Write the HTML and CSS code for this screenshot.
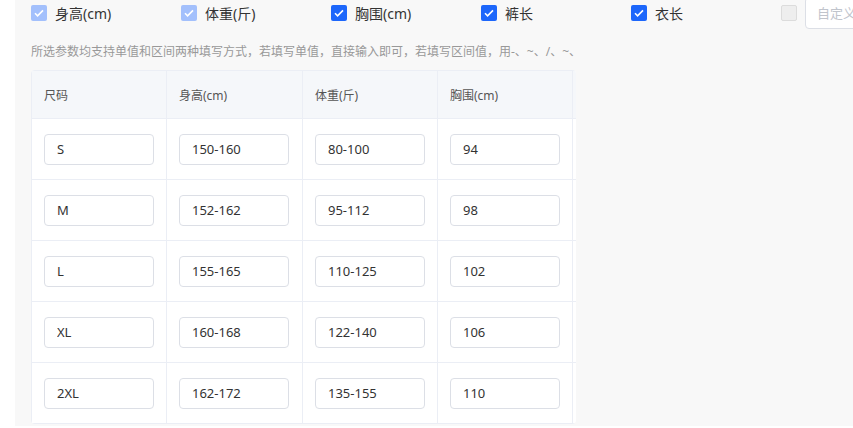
FILE: index.html
```
<!DOCTYPE html>
<html lang="zh-CN">
<head>
    <meta charset="UTF-8">
    <title>尺码表</title>
    <link rel="stylesheet" href="styles.css">
</head>
<body>
    <div class="panel">
        <div class="params">
            <label class="param"><span class="box disabled-on"><svg viewBox="0 0 16 16"><path d="M4 8.2l2.6 2.6L12 5.4" /></svg></span>身高(cm)</label>
            <label class="param"><span class="box disabled-on"><svg viewBox="0 0 16 16"><path d="M4 8.2l2.6 2.6L12 5.4" /></svg></span>体重(斤)</label>
            <label class="param"><span class="box on"><svg viewBox="0 0 16 16"><path d="M4 8.2l2.6 2.6L12 5.4" /></svg></span>胸围(cm)</label>
            <label class="param"><span class="box on"><svg viewBox="0 0 16 16"><path d="M4 8.2l2.6 2.6L12 5.4" /></svg></span>裤长</label>
            <label class="param"><span class="box on"><svg viewBox="0 0 16 16"><path d="M4 8.2l2.6 2.6L12 5.4" /></svg></span>衣长</label>
            <div class="param custom">
                <span class="box off"></span>
                <input class="custom-input" type="text" placeholder="自定义">
            </div>
        </div>

        <p class="hint">所选参数均支持单值和区间两种填写方式，若填写单值，直接输入即可，若填写区间值，用-、~、/、~、</p>

        <div class="table-wrap">
            <table class="size-table">
                <thead>
                    <tr>
                        <th>尺码</th>
                        <th>身高(cm)</th>
                        <th>体重(斤)</th>
                        <th>胸围(cm)</th>
                        <th></th>
                    </tr>
                </thead>
                <tbody id="rows"></tbody>
            </table>
        </div>
    </div>

    <script>
        const sizes = [
            ["S", "150-160", "80-100", "94"],
            ["M", "152-162", "95-112", "98"],
            ["L", "155-165", "110-125", "102"],
            ["XL", "160-168", "122-140", "106"],
            ["2XL", "162-172", "135-155", "110"]
        ];

        const rows = document.getElementById("rows");
        sizes.forEach(row => {
            const tr = document.createElement("tr");
            [...row, ""].forEach(value => {
                const td = document.createElement("td");
                td.innerHTML = `<input class="cell-input" type="text" value="${value}">`;
                tr.appendChild(td);
            });
            rows.appendChild(tr);
        });
    </script>
</body>
</html>
```

FILE: styles.css
```
* {
    box-sizing: border-box;
}

body {
    margin: 0;
    background-color: #fff;
    font-family: "Noto Sans", "Noto Sans CJK SC", sans-serif;
    color: #333;
    overflow: hidden;
}

.panel {
    margin-left: 15px;
    height: 428px;
    background-color: #f8f8f8;
    padding-left: 16px;
}

.params {
    display: flex;
    align-items: center;
    height: 30px;
    margin-top: -2px;
    white-space: nowrap;
}

.param {
    width: 150px;
    flex: 0 0 150px;
    display: flex;
    align-items: center;
    font-size: 14px;
    color: #333;
}

.box {
    width: 16px;
    height: 16px;
    border-radius: 2px;
    margin-right: 8px;
    display: inline-flex;
    align-items: center;
    justify-content: center;
}

.box svg {
    width: 16px;
    height: 16px;
    fill: none;
    stroke: #fff;
    stroke-width: 1.6;
}

.box.on {
    background-color: #1d67fb;
}

.box.disabled-on {
    background-color: #a3c0fc;
}

.box.off {
    background-color: #eeeeee;
    border: 1px solid #dcdcdc;
}

.custom .custom-input {
    width: 120px;
    height: 32px;
    border: 1px solid #dcdfe6;
    border-radius: 4px;
    padding: 0 11px;
    font-family: inherit;
    font-size: 13px;
    background-color: #fff;
}

.custom-input::placeholder {
    color: #c0c4cc;
}

.hint {
    margin: 16px 0 0;
    height: 16px;
    font-size: 12px;
    line-height: 16px;
    color: #999;
}

.table-wrap {
    margin-top: 10px;
    width: 545px;
    overflow: hidden;
    border-radius: 4px;
}

.size-table {
    border-collapse: separate;
    border-spacing: 0;
    table-layout: fixed;
    width: 676px;
    background-color: #fff;
    border-left: 1px solid #ebeef5;
    border-top: 1px solid #ebeef5;
}

.size-table th,
.size-table td {
    width: 135px;
    border-right: 1px solid #ebeef5;
    border-bottom: 1px solid #ebeef5;
    text-align: left;
    padding: 0 0 0 12px;
}

.size-table th:nth-child(2),
.size-table td:nth-child(2) {
    width: 136px;
}

.size-table th {
    height: 48px;
    background-color: #f5f7fa;
    font-size: 12px;
    font-weight: normal;
    color: #555;
}

.size-table td {
    height: 61px;
}

.cell-input {
    width: 110px;
    height: 31px;
    border: 1px solid #dcdfe6;
    border-radius: 4px;
    padding: 0 12px;
    font-family: inherit;
    font-size: 13px;
    color: #333;
    background-color: #fff;
    display: block;
}
```
